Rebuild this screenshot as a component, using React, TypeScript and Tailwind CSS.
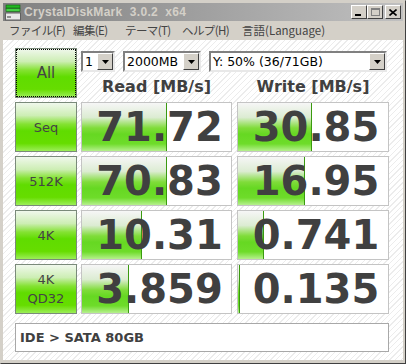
import React from "react";

const btnBg =
  "bg-[linear-gradient(to_bottom,#f0f8ec_0%,#cdeeb4_26%,#84e232_44%,#60dc00_58%,#66dd00_84%,#9cee58_100%)]";
const barBg =
  "bg-[linear-gradient(to_bottom,#f6f6f6_0%,#dcecd2_30%,#80dc3a_52%,#66d822_65%,#6edc2a_85%,#b6f08e_100%)]";

function Drive() {
  return (
    <svg width="16" height="17" viewBox="0 0 16 17">
      <rect x="1" y="1" width="14" height="3" fill="#22b822" stroke="#106010" strokeWidth="0.6" />
      <rect x="1" y="4.5" width="14" height="3" fill="#44d044" stroke="#106010" strokeWidth="0.6" />
      <rect x="0.5" y="9" width="15" height="7" fill="#e8e8e8" stroke="#606060" strokeWidth="1" />
      <rect x="2" y="12" width="4" height="2" fill="#909090" />
    </svg>
  );
}

function TitleBtn({ children }: { children: React.ReactNode }) {
  return (
    <div className="w-[16px] h-[14px] bg-[#d4d0c8] border border-t-white border-l-white border-r-[#404040] border-b-[#404040] flex items-center justify-center">
      {children}
    </div>
  );
}

function Combo({ w, text }: { w: string; text: string }) {
  return (
    <div
      className={`${w} h-[21px] bg-white border-2 border-t-[#808080] border-l-[#808080] border-r-[#e8e8e8] border-b-[#e8e8e8] flex items-center`}
    >
      <span className="flex-1 pl-[2px] text-[12.5px] leading-[17px] text-black font-['DejaVu_Sans',sans-serif] whitespace-nowrap">
        {text}
      </span>
      <div className="w-[16px] h-[17px] shrink-0 bg-[#d4d0c8] border border-t-white border-l-white border-r-[#404040] border-b-[#404040] flex items-center justify-center">
        <svg width="7" height="4" viewBox="0 0 7 4">
          <path d="M0 0H7L3.5 4Z" fill="#000" />
        </svg>
      </div>
    </div>
  );
}

function TestBtn({ children, dotted }: { children: React.ReactNode; dotted?: boolean }) {
  return (
    <div
      className={`w-[62px] h-[50px] shrink-0 border border-[#7a8a7a] ${btnBg} flex items-center justify-center text-center text-[13px] leading-[19px] text-[#444] font-['DejaVu_Sans',sans-serif] ${
        dotted ? "outline-1 outline-dotted outline-black -outline-offset-2" : ""
      }`}
    >
      {children}
    </div>
  );
}

function Cell({ value, bar, w }: { value: string; bar: number; w: string }) {
  return (
    <div className={`relative ${w} h-[50px] bg-white border border-[#c4c4c4] flex items-center justify-center overflow-hidden`}>
      <div
        className={`absolute left-0 top-0 bottom-0 ${barBg} border-r border-[#3a9a10]`}
        style={{ width: bar }}
      />
      <span className="relative text-[40px] leading-none font-bold text-[#404040] font-['DejaVu_Sans',sans-serif] pl-[6px]">
        {value}
      </span>
    </div>
  );
}

const rows = [
  { label: <>Seq</>, r: "71.72", rb: 85, w: "30.85", wb: 74 },
  { label: <>512K</>, r: "70.83", rb: 85, w: "16.95", wb: 67 },
  { label: <>4K</>, r: "10.31", rb: 60, w: "0.741", wb: 26 },
  { label: <>4K<br />QD32</>, r: "3.859", rb: 47, w: "0.135", wb: 2 },
];

export default function App() {
  return (
    <div className="w-[406px] h-[364px] bg-[#d4d0c8] border border-t-[#d4d0c8] border-l-[#d4d0c8] border-r-[#404040] border-b-[#404040] flex flex-col p-[2px] pb-[3px] overflow-hidden">
      {/* title bar */}
      <div className="h-[18px] shrink-0 bg-[linear-gradient(to_right,#808080,#c0c0c0)] flex items-center pl-[2px] pr-[2px]">
        <Drive />
        <span className="ml-[3px] text-[12px] font-bold text-[#d4d0c8] font-['Liberation_Sans',sans-serif] whitespace-pre tracking-[0.3px]">
          CrystalDiskMark  3.0.2  x64
        </span>
        <div className="ml-auto flex items-center">
          <TitleBtn>
            <div className="w-[6px] h-[2px] bg-black mt-[6px] -ml-[2px]" />
          </TitleBtn>
          <TitleBtn>
            <div className="w-[9px] h-[8px] border border-[#808080] border-t-2" />
          </TitleBtn>
          <div className="w-[2px]" />
          <TitleBtn>
            <svg width="8" height="7" viewBox="0 0 8 7">
              <path d="M0.5 0.5L7.5 6.5M7.5 0.5L0.5 6.5" stroke="#000" strokeWidth="1.6" />
            </svg>
          </TitleBtn>
        </div>
      </div>
      {/* menu bar */}
      <div className="h-[19px] shrink-0 flex items-center text-[11.5px] tracking-[-0.6px] text-[#444] font-['Noto_Sans_CJK_JP',sans-serif] whitespace-nowrap">
        <span className="ml-[6px] w-[64px] shrink-0">ファイル(F)</span>
        <span className="w-[52px] shrink-0">編集(E)</span>
        <span className="w-[57px] shrink-0">テーマ(T)</span>
        <span className="w-[60px] shrink-0">ヘルプ(H)</span>
        <span className="shrink-0 tracking-[0px]">言語(Language)</span>
      </div>
      {/* content */}
      <div className="flex-1 bg-[repeating-linear-gradient(135deg,#ffffff_0px,#ffffff_3px,#ececec_3px,#ececec_4px)] pl-[12px] pt-[8px] flex flex-col">
        <div className="flex gap-[4px]">
          <TestBtn dotted>
            <span className="text-[15px]">All</span>
          </TestBtn>
          <div className="flex flex-col w-[308px]">
            <div className="flex gap-[8px] mt-[3px]">
              <Combo w="w-[34px]" text="1" />
              <Combo w="w-[78px]" text="2000MB" />
              <Combo w="w-[178px]" text="Y: 50% (36/71GB)" />
            </div>
            <div className="flex gap-[5px] mt-[5px] text-[16px] font-bold text-[#404040] font-['DejaVu_Sans',sans-serif] leading-[20px]">
              <div className="w-[151px] text-center">Read [MB/s]</div>
              <div className="w-[152px] text-center">Write [MB/s]</div>
            </div>
          </div>
        </div>
        <div className="flex flex-col gap-[4px] mt-[4px]">
          {rows.map((r, i) => (
            <div key={i} className="flex gap-[4px]">
              <TestBtn>
                <span>{r.label}</span>
              </TestBtn>
              <div className="flex gap-[5px]">
                <Cell value={r.r} bar={r.rb} w="w-[151px]" />
                <Cell value={r.w} bar={r.wb} w="w-[152px]" />
              </div>
            </div>
          ))}
        </div>
        <div className="mt-[9px] w-[374px] h-[29px] bg-white border border-[#a8a8a8] flex items-center pl-[4px] text-[13px] font-bold text-[#404040] font-['DejaVu_Sans',sans-serif]">
          IDE &gt; SATA 80GB
        </div>
      </div>
    </div>
  );
}
